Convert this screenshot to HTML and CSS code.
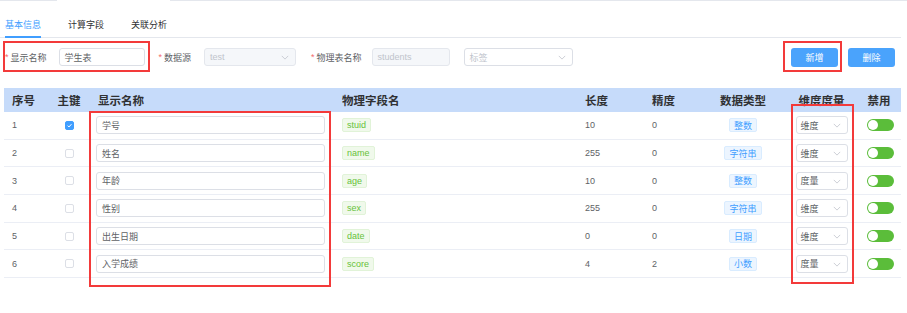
FILE: index.html
```html
<!DOCTYPE html>
<html lang="zh">
<head>
<meta charset="utf-8">
<title>表配置</title>
<link rel="stylesheet" href="styles.css">
</head>
<body>
<div class="page">
  <div class="topline"><span class="seg seg1"></span><span class="gap"></span><span class="seg seg2"></span></div>
  <div class="tabs">
    <div class="tab active">基本信息</div>
    <div class="tab">计算字段</div>
    <div class="tab">关联分析</div>
  </div>

  <div class="form">
    <label class="lbl l1"><span class="star">*</span>显示名称</label>
    <div class="input i1">学生表</div>
    <label class="lbl l2"><span class="star">*</span>数据源</label>
    <div class="input disabled s1">test<svg class="chev" viewBox="0 0 10 6"><path d="M1 1l4 4 4-4"/></svg></div>
    <label class="lbl l3"><span class="star">*</span>物理表名称</label>
    <div class="input disabled i3">students</div>
    <div class="input placeholder s2">标签<svg class="chev" viewBox="0 0 10 6"><path d="M1 1l4 4 4-4"/></svg></div>
    <div class="spacer"></div>
    <button class="btn">新增</button>
    <button class="btn b2">删除</button>
  </div>

  <div class="table">
    <div class="row head">
      <div class="c c1">序号</div>
      <div class="c c2">主键</div>
      <div class="c c3">显示名称</div>
      <div class="c c4">物理字段名</div>
      <div class="c c5">长度</div>
      <div class="c c6">精度</div>
      <div class="c c7">数据类型</div>
      <div class="c c8">维度度量</div>
      <div class="c c9">禁用</div>
    </div>

    <div class="row">
      <div class="c c1">1</div>
      <div class="c c2"><span class="cb checked"><svg viewBox="0 0 10 10"><path d="M2.3 5.2l1.9 1.9 3.6-4"/></svg></span></div>
      <div class="c c3"><div class="cell-input">学号</div></div>
      <div class="c c4"><span class="tag green">stuid</span></div>
      <div class="c c5">10</div>
      <div class="c c6">0</div>
      <div class="c c7"><span class="tag blue">整数</span></div>
      <div class="c c8"><div class="cell-select">维度<svg class="chev" viewBox="0 0 10 6"><path d="M1 1l4 4 4-4"/></svg></div></div>
      <div class="c c9"><span class="switch"></span></div>
    </div>

    <div class="row">
      <div class="c c1">2</div>
      <div class="c c2"><span class="cb"></span></div>
      <div class="c c3"><div class="cell-input">姓名</div></div>
      <div class="c c4"><span class="tag green">name</span></div>
      <div class="c c5">255</div>
      <div class="c c6">0</div>
      <div class="c c7"><span class="tag blue">字符串</span></div>
      <div class="c c8"><div class="cell-select">维度<svg class="chev" viewBox="0 0 10 6"><path d="M1 1l4 4 4-4"/></svg></div></div>
      <div class="c c9"><span class="switch"></span></div>
    </div>

    <div class="row">
      <div class="c c1">3</div>
      <div class="c c2"><span class="cb"></span></div>
      <div class="c c3"><div class="cell-input">年龄</div></div>
      <div class="c c4"><span class="tag green">age</span></div>
      <div class="c c5">10</div>
      <div class="c c6">0</div>
      <div class="c c7"><span class="tag blue">整数</span></div>
      <div class="c c8"><div class="cell-select">度量<svg class="chev" viewBox="0 0 10 6"><path d="M1 1l4 4 4-4"/></svg></div></div>
      <div class="c c9"><span class="switch"></span></div>
    </div>

    <div class="row">
      <div class="c c1">4</div>
      <div class="c c2"><span class="cb"></span></div>
      <div class="c c3"><div class="cell-input">性别</div></div>
      <div class="c c4"><span class="tag green">sex</span></div>
      <div class="c c5">255</div>
      <div class="c c6">0</div>
      <div class="c c7"><span class="tag blue">字符串</span></div>
      <div class="c c8"><div class="cell-select">维度<svg class="chev" viewBox="0 0 10 6"><path d="M1 1l4 4 4-4"/></svg></div></div>
      <div class="c c9"><span class="switch"></span></div>
    </div>

    <div class="row">
      <div class="c c1">5</div>
      <div class="c c2"><span class="cb"></span></div>
      <div class="c c3"><div class="cell-input">出生日期</div></div>
      <div class="c c4"><span class="tag green">date</span></div>
      <div class="c c5">0</div>
      <div class="c c6">0</div>
      <div class="c c7"><span class="tag blue">日期</span></div>
      <div class="c c8"><div class="cell-select">维度<svg class="chev" viewBox="0 0 10 6"><path d="M1 1l4 4 4-4"/></svg></div></div>
      <div class="c c9"><span class="switch"></span></div>
    </div>

    <div class="row">
      <div class="c c1">6</div>
      <div class="c c2"><span class="cb"></span></div>
      <div class="c c3"><div class="cell-input">入学成绩</div></div>
      <div class="c c4"><span class="tag green">score</span></div>
      <div class="c c5">4</div>
      <div class="c c6">2</div>
      <div class="c c7"><span class="tag blue">小数</span></div>
      <div class="c c8"><div class="cell-select">度量<svg class="chev" viewBox="0 0 10 6"><path d="M1 1l4 4 4-4"/></svg></div></div>
      <div class="c c9"><span class="switch"></span></div>
    </div>
  </div>

  <div class="mark m1"></div>
  <div class="mark m2"></div>
  <div class="mark m3"></div>
  <div class="mark m4"></div>
</div>
</body>
</html>
```

FILE: styles.css
```css
* { box-sizing: border-box; }
html, body { margin: 0; padding: 0; background: #fff; }
body {
  font-family: "Liberation Sans", "Noto Sans CJK SC", sans-serif;
  font-size: 9px;
  color: #606266;
}
.page { position: relative; width: 907px; height: 313px; overflow: hidden; }

.topline { display: flex; height: 1px; }
.topline .seg { background: #e4e7ed; height: 1px; }
.topline .seg1 { width: 57px; }
.topline .gap { width: 113px; }
.topline .seg2 { flex: 1; }

.tabs {
  display: flex;
  height: 37px;
  margin-right: 6px;
  border-bottom: 1px solid #e4e7ed;
  padding-left: 5px;
  align-items: flex-end;
}
.tab {
  height: 35px;
  color: #303133;
  margin-right: 27px;
  position: relative;
  line-height: 1;
  display: flex;
  align-items: center;
  padding-top: 12px;
}
.tab.active { color: #409eff; }
.tab.active::after {
  content: "";
  position: absolute;
  left: 0; right: 0; bottom: -1px;
  height: 2px;
  background: #409eff;
}

.form {
  display: flex;
  align-items: center;
  margin-top: 10px;
  height: 18px;
  padding-right: 12px;
}
.lbl { color: #606266; display: flex; align-items: center; }
.star { color: #f56c6c; margin-right: 2px; }
.l1 { margin-left: 5px; }
.l2 { margin-left: 14px; }
.l3 { margin-left: 15px; }
.input {
  height: 18px;
  border: 1px solid #dcdfe6;
  border-radius: 3px;
  padding: 0 5px;
  display: flex;
  align-items: center;
  color: #606266;
  position: relative;
}
.input.disabled { background: #f5f7fa; border-color: #e4e7ed; color: #c0c4cc; }
.input.placeholder { color: #c0c4cc; }
.i1 { width: 86px; margin-left: 12px; }
.s1 { width: 92px; margin-left: 13px; }
.i3 { width: 78px; margin-left: 10px; }
.s2 { width: 109px; margin-left: 14px; }
.chev {
  position: absolute;
  right: 6px; top: 6px;
  width: 8px; height: 5px;
  fill: none; stroke: #c0c4cc; stroke-width: 1;
}
.spacer { flex: 1; }
.btn {
  width: 47px; height: 19px;
  border: 0; border-radius: 3px;
  background: #4aa3fc;
  color: #fff;
  font: inherit; font-size: 9px;
  padding: 0;
}
.b2 { margin-left: 10px; }

.table { margin-top: 22px; margin-left: 4px; width: 897px; }
.row {
  display: grid;
  grid-template-columns: 44px 42px 244px 243px 67px 56px 86px 71px 44px;
  height: 27.7px;
  border-bottom: 1px solid #ebeef5;
  align-items: center;
}
.row.head {
  height: 24px;
  background: #c6dbfa;
  border-bottom: 0;
  font-size: 11.5px;
  font-weight: bold;
  color: #303133;
}
.c { padding-left: 8px; display: flex; align-items: center; }
.c2, .c7, .c8, .c9 { justify-content: center; padding-left: 0; }
.c3 { padding-left: 6px; }
.head .c3 { padding-left: 8px; }

.cb {
  width: 9px; height: 9px;
  border: 1px solid #dcdfe6;
  border-radius: 2px;
  background: #fff;
  display: block;
  margin-left: 1px;
}
.cb.checked { background: #409eff; border-color: #409eff; }
.cb svg { display: block; width: 7px; height: 7px; fill: none; stroke: #fff; stroke-width: 1.4; }

.cell-input {
  width: 229px; height: 18px;
  border: 1px solid #dcdfe6;
  border-radius: 3px;
  padding: 0 5px;
  display: flex; align-items: center;
  color: #606266;
}
.tag {
  display: inline-flex; align-items: center;
  height: 14px;
  padding: 0 4px;
  border-radius: 2px;
  border: 1px solid;
  font-size: 9px;
}
.tag.green { background: #f0f9eb; border-color: #e1f3d8; color: #67c23a; }
.tag.blue { background: #ecf5ff; border-color: #d9ecff; color: #409eff; }

.cell-select {
  width: 52px; height: 18px;
  border: 1px solid #dcdfe6;
  border-radius: 3px;
  padding: 0 4px;
  display: flex; align-items: center;
  position: relative;
  color: #606266;
}
.switch {
  width: 27px; height: 12px;
  border-radius: 6px;
  background: #5bbd3a;
  position: relative;
  display: block;
  margin-left: 2px;
}
.switch::after {
  content: "";
  position: absolute;
  left: 1px; top: 1px;
  width: 10px; height: 10px;
  border-radius: 50%;
  background: #fff;
}

.mark { position: absolute; border: 2px solid #f33a3a; pointer-events: none; }
.m1 { left: 3px; top: 41px; width: 147px; height: 31px; }
.m2 { left: 783px; top: 41px; width: 59px; height: 31px; }
.m3 { left: 89px; top: 111px; width: 242px; height: 176px; }
.m4 { left: 791px; top: 104px; width: 63px; height: 180px; }
```
